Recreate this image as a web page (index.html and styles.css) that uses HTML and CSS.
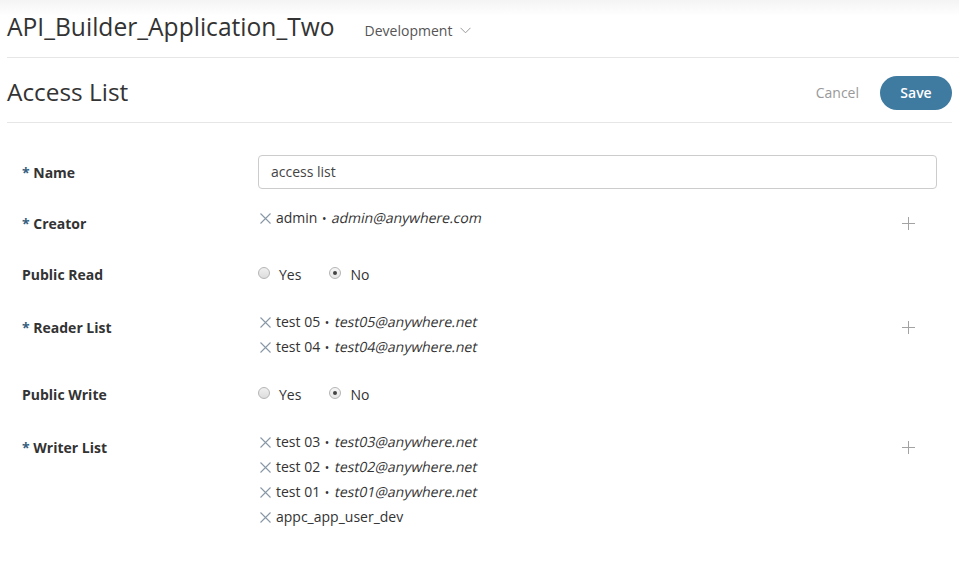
FILE: index.html
```html
<!DOCTYPE html>
<html>
<head>
<meta charset="utf-8">
<link rel="stylesheet" href="styles.css">
</head>
<body>
<div class="page">
  <header class="topbar">
    <h1 class="app-title">API_Builder_Application_Two</h1>
    <div class="env">Development
      <svg class="chev" width="11" height="7" viewBox="0 0 11 7"><path d="M0.5 0.8 L5.5 5.8 L10.5 0.8" fill="none" stroke="#999" stroke-width="1"/></svg>
    </div>
  </header>
  <div class="page-head">
    <h2 class="page-title">Access List</h2>
    <div class="actions">
      <span class="cancel">Cancel</span>
      <button class="save">Save</button>
    </div>
  </div>
  <form class="form">
    <div class="row">
      <label class="lbl"><span class="req">*</span> Name</label>
      <div class="ctl"><div class="input">access list</div></div>
    </div>
    <div class="row">
      <label class="lbl"><span class="req">*</span> Creator</label>
      <div class="ctl list">
        <div class="item"><svg class="x" width="11" height="11" viewBox="0 0 11 11"><path d="M0.5 0.5 L10.5 10.5 M10.5 0.5 L0.5 10.5" stroke="#8797a5" stroke-width="1.1"/></svg>admin <span class="dot">•</span> <em>admin@anywhere.com</em></div>
      </div>
      <svg class="plus" width="13" height="13" viewBox="0 0 13 13"><path d="M6.5 0 V13 M0 6.5 H13" stroke="#a3a3a3" stroke-width="1"/></svg>
    </div>
    <div class="row radio-row">
      <label class="lbl">Public Read</label>
      <div class="ctl radios">
        <span class="radio"><span class="circle"></span>Yes</span>
        <span class="radio"><span class="circle on"></span>No</span>
      </div>
    </div>
    <div class="row">
      <label class="lbl"><span class="req">*</span> Reader List</label>
      <div class="ctl list">
        <div class="item"><svg class="x" width="11" height="11" viewBox="0 0 11 11"><path d="M0.5 0.5 L10.5 10.5 M10.5 0.5 L0.5 10.5" stroke="#8797a5" stroke-width="1.1"/></svg>test 05 <span class="dot">•</span> <em>test05@anywhere.net</em></div>
        <div class="item"><svg class="x" width="11" height="11" viewBox="0 0 11 11"><path d="M0.5 0.5 L10.5 10.5 M10.5 0.5 L0.5 10.5" stroke="#8797a5" stroke-width="1.1"/></svg>test 04 <span class="dot">•</span> <em>test04@anywhere.net</em></div>
      </div>
      <svg class="plus" width="13" height="13" viewBox="0 0 13 13"><path d="M6.5 0 V13 M0 6.5 H13" stroke="#a3a3a3" stroke-width="1"/></svg>
    </div>
    <div class="row radio-row">
      <label class="lbl">Public Write</label>
      <div class="ctl radios">
        <span class="radio"><span class="circle"></span>Yes</span>
        <span class="radio"><span class="circle on"></span>No</span>
      </div>
    </div>
    <div class="row">
      <label class="lbl"><span class="req">*</span> Writer List</label>
      <div class="ctl list">
        <div class="item"><svg class="x" width="11" height="11" viewBox="0 0 11 11"><path d="M0.5 0.5 L10.5 10.5 M10.5 0.5 L0.5 10.5" stroke="#8797a5" stroke-width="1.1"/></svg>test 03 <span class="dot">•</span> <em>test03@anywhere.net</em></div>
        <div class="item"><svg class="x" width="11" height="11" viewBox="0 0 11 11"><path d="M0.5 0.5 L10.5 10.5 M10.5 0.5 L0.5 10.5" stroke="#8797a5" stroke-width="1.1"/></svg>test 02 <span class="dot">•</span> <em>test02@anywhere.net</em></div>
        <div class="item"><svg class="x" width="11" height="11" viewBox="0 0 11 11"><path d="M0.5 0.5 L10.5 10.5 M10.5 0.5 L0.5 10.5" stroke="#8797a5" stroke-width="1.1"/></svg>test 01 <span class="dot">•</span> <em>test01@anywhere.net</em></div>
        <div class="item"><svg class="x" width="11" height="11" viewBox="0 0 11 11"><path d="M0.5 0.5 L10.5 10.5 M10.5 0.5 L0.5 10.5" stroke="#8797a5" stroke-width="1.1"/></svg>appc_app_user_dev</div>
      </div>
      <svg class="plus" width="13" height="13" viewBox="0 0 13 13"><path d="M6.5 0 V13 M0 6.5 H13" stroke="#a3a3a3" stroke-width="1"/></svg>
    </div>
  </form>
</div>
</body>
</html>
```
FILE: styles.css
```css
* { box-sizing: border-box; }
html, body { margin: 0; padding: 0; }
body {
  font-family: "Open Sans", "Liberation Sans", sans-serif;
  color: #333;
  background: linear-gradient(#f4f4f4 0px, #ffffff 16px) no-repeat;
  width: 959px;
  height: 574px;
  overflow: hidden;
}
.page { padding: 0 7px; }
.topbar {
  display: flex;
  align-items: center;
  height: 58px;
  border-bottom: 1px solid #e6e6e6;
  margin-right: -7px;
}
.app-title {
  margin: 0;
  font-size: 24.6px;
  font-weight: 400;
  color: #333;
  line-height: 30px;
  margin-top: -3px;
}
.env {
  margin-left: 30px;
  font-size: 14px;
  color: #555;
  display: flex;
  align-items: center;
  padding-top: 3px;
}
.chev { margin-left: 8px; margin-top: 1px; }
.page-head {
  display: flex;
  align-items: center;
  justify-content: space-between;
  height: 65px;
  border-bottom: 1px solid #e6e6e6;
}
.page-title {
  margin: 0;
  font-size: 24.4px;
  font-weight: 400;
  color: #333;
  line-height: 30px;
  padding-top: 4px;
}
.actions { display: flex; align-items: center; padding-top: 5px; }
.cancel { color: #999; font-size: 14px; margin-right: 21px; }
.save {
  font-family: inherit;
  background: #3f7aa0;
  color: #fff;
  border: none;
  border-radius: 17px;
  width: 72px;
  height: 34px;
  font-size: 14px;
  font-weight: 600;
  padding: 0;
}
.form {
  padding: 32px 15px 0 15px;
  display: flex;
  flex-direction: column;
  gap: 17px;
}
.row {
  display: flex;
  align-items: flex-start;
  position: relative;
  min-height: 34px;
}
.radio-row { min-height: 36px; }
.lbl {
  width: 236px;
  flex: none;
  font-weight: 700;
  font-size: 14px;
  line-height: 20px;
  padding-top: 8px;
  color: #333;
}
.req { color: #35607e; }
.ctl { flex: 1; }
.input {
  width: 679px;
  height: 34px;
  border: 1px solid #ccc;
  border-radius: 4px;
  padding: 0 12px;
  font-size: 14px;
  line-height: 32px;
  color: #444;
}
.list { padding-top: 0; }
.item {
  font-size: 14px;
  line-height: 24px;
  height: 25px;
  color: #333;
  white-space: nowrap;
}
.x {
  margin-left: 2px;
  margin-right: 5px;
  vertical-align: -1px;
}
.dot { font-size: 12px; padding: 0 1px; }
.item em {
  font-style: normal;
  display: inline-block;
  transform: skewX(-12deg);
  transform-origin: 0 70%;
}
.plus {
  position: absolute;
  right: 22px;
  top: 11px;
}
.radios {
  display: flex;
  align-items: center;
  padding-top: 8px;
  font-size: 14px;
}
.radio {
  display: flex;
  align-items: center;
  margin-right: 28px;
  line-height: 20px;
  color: #333;
}
.circle {
  width: 12px;
  height: 12px;
  border-radius: 50%;
  border: 1px solid #b5b5b5;
  background: linear-gradient(#f0f0f0, #dcdcdc);
  margin-right: 9px;
  margin-top: -5px;
  display: inline-flex;
  align-items: center;
  justify-content: center;
}
.circle.on { background: linear-gradient(#f6f6f6, #e6e6e6); }
.circle.on::after {
  content: "";
  width: 4px;
  height: 4px;
  border-radius: 50%;
  background: #444;
}
```
